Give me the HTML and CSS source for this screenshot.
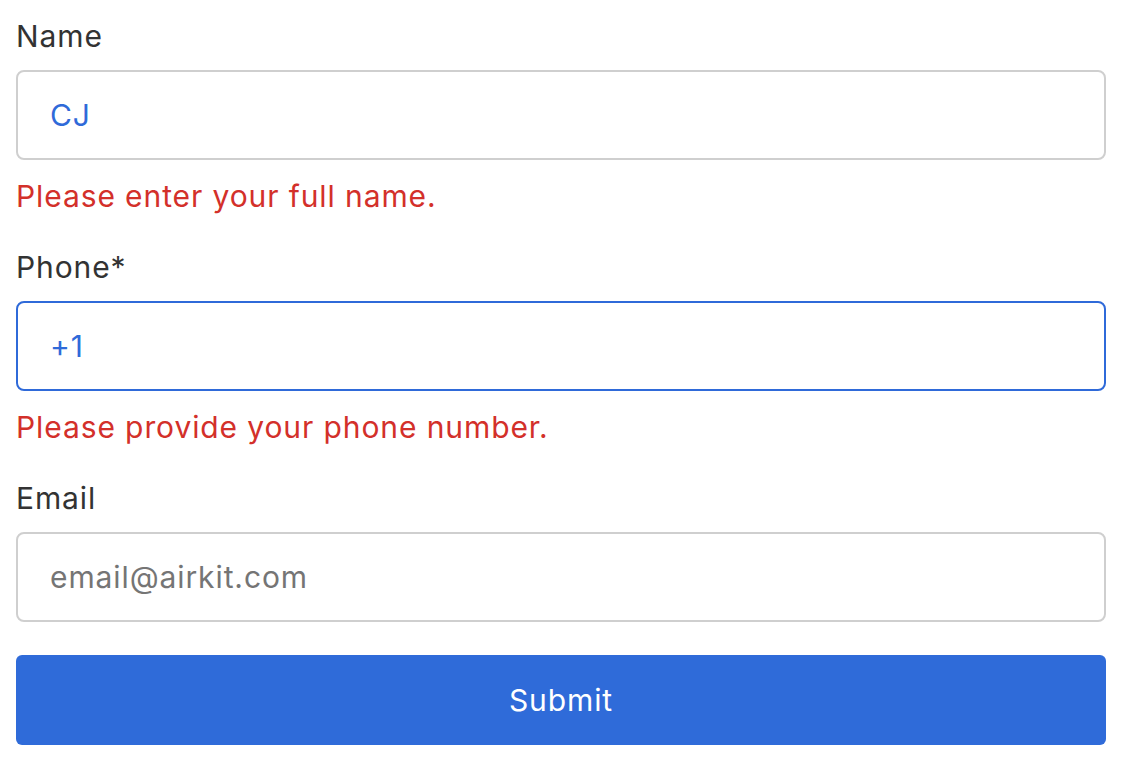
FILE: index.html
```html
<!DOCTYPE html>
<html lang="en">
<head>
  <meta charset="UTF-8">
  <title>Contact Form</title>
  <link rel="stylesheet" href="styles.css">
</head>
<body>
  <form class="contact-form" onsubmit="return false">
    <div class="field">
      <label for="name">Name</label>
      <input type="text" id="name" value="CJ">
      <div class="error">Please enter your full name.</div>
    </div>
    <div class="field">
      <label for="phone">Phone*</label>
      <input type="tel" id="phone" class="focused" value="+1">
      <div class="error">Please provide your phone number.</div>
    </div>
    <div class="field">
      <label for="email">Email</label>
      <input type="email" id="email" placeholder="email@airkit.com">
    </div>
    <button type="submit" class="submit">Submit</button>
  </form>
</body>
</html>
```

FILE: styles.css
```css
body {
  margin: 0;
  padding: 16px;
  background: #fff;
  font-family: Inter, "Noto Sans", sans-serif;
  color: #333;
}
.contact-form {
  width: 1090px;
  display: flex;
  flex-direction: column;
  gap: 31px;
}
.field {
  display: flex;
  flex-direction: column;
}
label {
  margin-bottom: 14px;
  font-size: 30px;
  line-height: 40px;
  letter-spacing: 0.9px;
  color: #333;
}
input {
  box-sizing: border-box;
  height: 90px;
  padding: 0 32px;
  border: 2px solid #cfcfcf;
  border-radius: 8px;
  font-family: inherit;
  font-size: 30px;
  letter-spacing: 0.9px;
  color: #2f6ad9;
  outline: none;
}
input::placeholder {
  color: #757575;
}
input.focused {
  border-color: #2f6ad9;
}
.error {
  margin-top: 16px;
  font-size: 30px;
  line-height: 40px;
  letter-spacing: 0.9px;
  color: #d3302a;
}
.submit {
  margin-top: 2px;
  height: 90px;
  border: none;
  border-radius: 6px;
  background: #2f6bd9;
  color: #fff;
  font-family: inherit;
  font-size: 30px;
  letter-spacing: 0.9px;
}
```
